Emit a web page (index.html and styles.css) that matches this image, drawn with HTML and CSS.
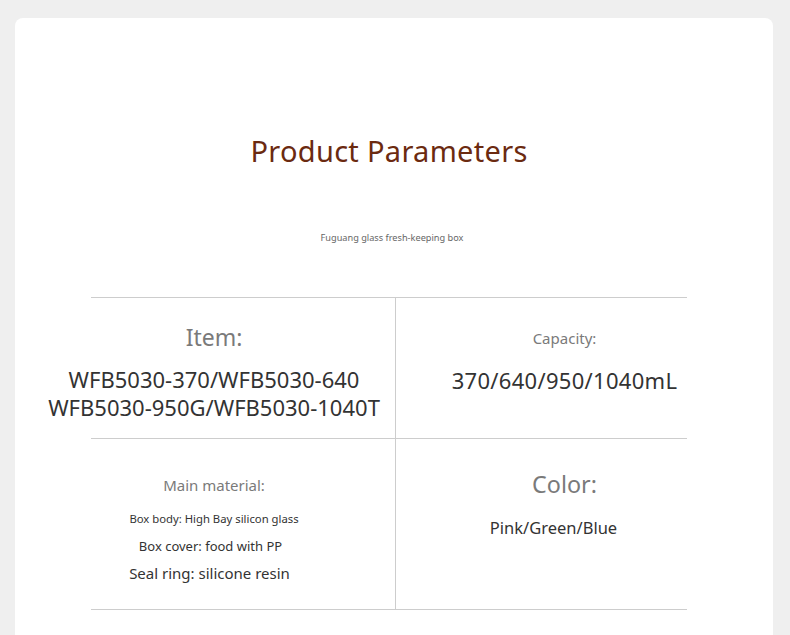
FILE: index.html
```html
<!DOCTYPE html>
<html lang="en">
<head>
<meta charset="utf-8">
<title>Product Parameters</title>
<link rel="stylesheet" href="styles.css">
</head>
<body>
<div class="card">
  <h1 class="title">Product Parameters</h1>
  <p class="subtitle">Fuguang glass fresh-keeping box</p>
  <div class="params">
    <div class="row row-1">
      <div class="cell cell-left">
        <div class="label label-item">Item:</div>
        <div class="value value-item">
          <span>WFB5030-370/WFB5030-640</span>
          <span>WFB5030-950G/WFB5030-1040T</span>
        </div>
      </div>
      <div class="cell cell-right">
        <div class="label label-capacity">Capacity:</div>
        <div class="value value-capacity">370/640/950/1040mL</div>
      </div>
    </div>
    <div class="row row-2">
      <div class="cell cell-left">
        <div class="label label-material">Main material:</div>
        <div class="mat mat-body">Box body: High Bay silicon glass</div>
        <div class="mat mat-cover">Box cover: food with PP</div>
        <div class="mat mat-seal">Seal ring: silicone resin</div>
      </div>
      <div class="cell cell-right">
        <div class="label label-color">Color:</div>
        <div class="value value-color">Pink/Green/Blue</div>
      </div>
    </div>
  </div>
</div>
</body>
</html>
```
FILE: styles.css
```css
html, body {
  margin: 0;
  padding: 0;
  background: #efefef;
  height: 100%;
  overflow: hidden;
}
body {
  font-family: "Noto Sans", "Open Sans", sans-serif;
  padding: 18px 17px 0 15px;
  box-sizing: border-box;
}
.card {
  background: #ffffff;
  border-radius: 8px;
  height: 700px;
  padding-top: 115px;
  box-sizing: border-box;
}
.title {
  margin: 0 10px 0 0;
  font-weight: 400;
  font-size: 29px;
  line-height: 36px;
  text-align: center;
  color: #6b2a10;
  letter-spacing: 0.3px;
}
.subtitle {
  margin: 61px 4px 0 0;
  font-size: 9.2px;
  line-height: 16px;
  text-align: center;
  color: #666666;
}
.params {
  margin: 51px 0 0 76px;
  width: 596px;
}
.row {
  display: grid;
  grid-template-columns: 304px 292px;
  border-top: 1px solid #cdcdcd;
}
.row-2 {
  border-bottom: 1px solid #cdcdcd;
}
.row-1 { height: 140px; }
.row-2 { height: 170px; }
.cell {
  display: flex;
  flex-direction: column;
  align-items: center;
  white-space: nowrap;
}
.cell-left {
  padding-right: 58px;
}
.cell-right {
  border-left: 1px solid #cdcdcd;
  padding-left: 46px;
}
.label {
  color: #7a7a7a;
}
.value {
  color: #333333;
}
.label-item {
  margin-top: 24px;
  font-size: 23px;
  line-height: 30px;
}
.value-item {
  margin-top: 13px;
  font-size: 22px;
  line-height: 28px;
  display: flex;
  flex-direction: column;
  align-items: center;
}
.label-capacity {
  margin-top: 25px;
  font-size: 15px;
  line-height: 30px;
}
.value-capacity {
  margin-top: 13px;
  font-size: 22px;
  letter-spacing: 0.3px;
  line-height: 28px;
}
.label-material {
  margin-top: 34px;
  font-size: 15px;
  line-height: 24px;
}
.mat {
  color: #333333;
  line-height: 20px;
}
.mat-body {
  margin-top: 12px;
  font-size: 11.3px;
}
.mat-cover {
  margin-top: 7px;
  margin-right: 7px;
  font-size: 13px;
}
.mat-seal {
  margin-top: 7px;
  margin-right: 9px;
  font-size: 15px;
}
.label-color {
  margin-top: 30px;
  font-size: 23.3px;
  line-height: 30px;
}
.value-color {
  margin-top: 17px;
  margin-right: 22px;
  font-size: 16.5px;
  line-height: 24px;
}
```
